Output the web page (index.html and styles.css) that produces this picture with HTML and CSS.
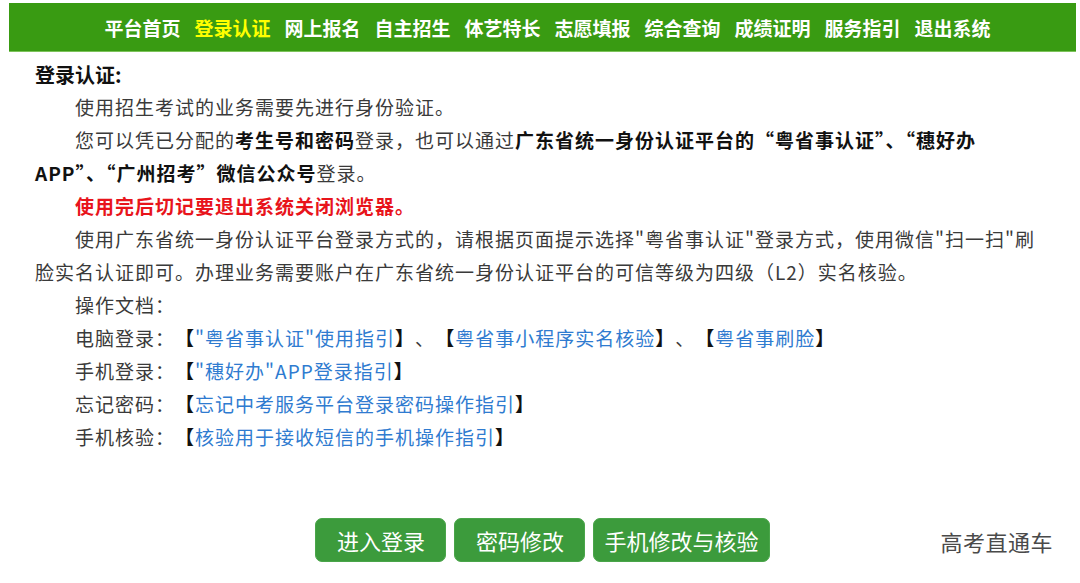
FILE: index.html
```html
<!DOCTYPE html>
<html lang="zh-CN">
<head>
    <meta charset="UTF-8">
    <meta name="viewport" content="width=device-width, initial-scale=1.0">
    <title>登录认证</title>
    <link rel="stylesheet" href="styles.css">
</head>
<body>
    <div class="page">
        <nav class="nav">
            <a href="#">平台首页</a>
            <a href="#" class="active">登录认证</a>
            <a href="#">网上报名</a>
            <a href="#">自主招生</a>
            <a href="#">体艺特长</a>
            <a href="#">志愿填报</a>
            <a href="#">综合查询</a>
            <a href="#">成绩证明</a>
            <a href="#">服务指引</a>
            <a href="#">退出系统</a>
        </nav>

        <div class="content">
            <h2>登录认证:</h2>
            <p class="indent">使用招生考试的业务需要先进行身份验证。</p>
            <p class="indent">您可以凭已分配的<b>考生号和密码</b>登录，也可以通过<b>广东省统一身份认证平台的“粤省事认证”、“穗好办<br>APP”、“广州招考”微信公众号</b>登录。</p>
            <p class="indent warn">使用完后切记要退出系统关闭浏览器。</p>
            <p class="indent">使用广东省统一身份认证平台登录方式的，请根据页面提示选择"粤省事认证"登录方式，使用微信"扫一扫"刷<br>脸实名认证即可。办理业务需要账户在广东省统一身份认证平台的可信等级为四级（L2）实名核验。</p>
            <p class="indent">操作文档：</p>
            <p class="indent">电脑登录：<span class="br">【</span><a href="#">"粤省事认证"使用指引</a><span class="br">】</span>、<span class="br">【</span><a href="#">粤省事小程序实名核验</a><span class="br">】</span>、<span class="br">【</span><a href="#">粤省事刷脸</a><span class="br">】</span></p>
            <p class="indent">手机登录：<span class="br">【</span><a href="#">"穗好办"APP登录指引</a><span class="br">】</span></p>
            <p class="indent">忘记密码：<span class="br">【</span><a href="#">忘记中考服务平台登录密码操作指引</a><span class="br">】</span></p>
            <p class="indent">手机核验：<span class="br">【</span><a href="#">核验用于接收短信的手机操作指引</a><span class="br">】</span></p>
        </div>

        <div class="actions">
            <button>进入登录</button>
            <button>密码修改</button>
            <button>手机修改与核验</button>
        </div>

        <div class="watermark">高考直通车</div>
    </div>
</body>
</html>
```

FILE: styles.css
```css
body {
    margin: 0;
    background-color: #fff;
    font-family: "Noto Sans CJK SC", "Liberation Sans", sans-serif;
    text-spacing-trim: space-all;
}
.page {
    position: relative;
    height: 583px;
    padding: 3px 4px 0 9px;
    box-sizing: border-box;
}
.nav {
    display: flex;
    justify-content: center;
    gap: 14px;
    height: 49px;
    align-items: center;
    padding-left: 10px;
    background-color: #399b12;
    border-bottom: 1px solid #7cc35a;
    box-sizing: border-box;
}
.nav a {
    color: #fff;
    font-size: 19px;
    font-weight: bold;
    text-decoration: none;
}
.nav a.active {
    color: #ffff00;
}
.content {
    padding: 8px 20px 0 26px;
    color: #3a3a3a;
    font-size: 19px;
    letter-spacing: 1px;
}
.content h2 {
    margin: 0;
    font-size: 20px;
    line-height: 30px;
    color: #111;
    letter-spacing: 0;
}
.content p {
    margin: 0;
    line-height: 33px;
}
.indent {
    text-indent: 40px;
}
.content b {
    color: #111;
    letter-spacing: 1px;
    text-spacing-trim: normal;
}
.warn {
    color: #e8141b;
    font-weight: bold;
}
.content a {
    color: #2f7bd0;
    text-decoration: none;
}
.br {
    color: #111;
    font-weight: bold;
}
.actions {
    display: flex;
    justify-content: center;
    gap: 8px;
    margin-top: 65px;
}
.actions button {
    min-width: 131px;
    height: 44px;
    padding: 0 10px;
    border: 1px solid #4aa54a;
    border-radius: 7px;
    background-color: #3c9b3c;
    color: #fff;
    font-family: "Noto Sans CJK SC", sans-serif;
    font-size: 22px;
    cursor: pointer;
}
.watermark {
    position: absolute;
    right: 27px;
    top: 525px;
    color: #4a4a4a;
    font-size: 22px;
    letter-spacing: 0.5px;
}
```
